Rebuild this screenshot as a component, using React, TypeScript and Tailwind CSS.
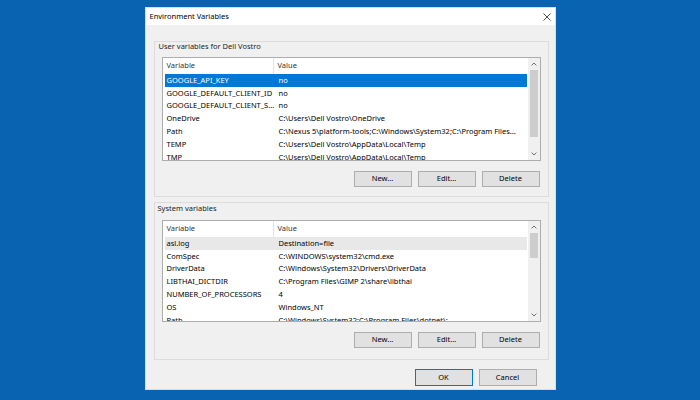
import React from "react";

type Row = [string, string];

const userRows: Row[] = [
  ["GOOGLE_API_KEY", "no"],
  ["GOOGLE_DEFAULT_CLIENT_ID", "no"],
  ["GOOGLE_DEFAULT_CLIENT_S...", "no"],
  ["OneDrive", "C:\\Users\\Dell Vostro\\OneDrive"],
  ["Path", "C:\\Nexus 5\\platform-tools;C:\\Windows\\System32;C:\\Program Files..."],
  ["TEMP", "C:\\Users\\Dell Vostro\\AppData\\Local\\Temp"],
  ["TMP", "C:\\Users\\Dell Vostro\\AppData\\Local\\Temp"],
];

const systemRows: Row[] = [
  ["asl.log", "Destination=file"],
  ["ComSpec", "C:\\WINDOWS\\system32\\cmd.exe"],
  ["DriverData", "C:\\Windows\\System32\\Drivers\\DriverData"],
  ["LIBTHAI_DICTDIR", "C:\\Program Files\\GIMP 2\\share\\libthai"],
  ["NUMBER_OF_PROCESSORS", "4"],
  ["OS", "Windows_NT"],
  ["Path", "C:\\Windows\\System32;C:\\Program Files\\dotnet\\;"],
];

const Chevron = ({ down = false }: { down?: boolean }) => (
  <svg width="6" height="4" viewBox="0 0 6 4" className={down ? "rotate-180" : ""}>
    <path d="M0.6 3.4 L3 1 L5.4 3.4" fill="none" stroke="#606060" strokeWidth="0.9" />
  </svg>
);

interface ListBoxProps {
  rows: Row[];
  focused: boolean;
  height: string;
  thumbTop: string;
  thumbHeight: string;
}

const ListBox = ({ rows, focused, height, thumbTop, thumbHeight }: ListBoxProps) => (
  <div className={`${height} flex border border-[#adadad] bg-white overflow-hidden`}>
    <div className="flex-1 flex flex-col overflow-hidden">
      <div className="h-[16px] shrink-0 flex items-center text-[#333]">
        <div className="w-[111px] h-full flex items-center pl-[4px] border-r border-[#e5e5e5]">
          Variable
        </div>
        <div className="pl-[4px]">Value</div>
      </div>
      <div className="px-[2px] pr-[1px]">
        {rows.map(([name, value], i) => {
          const sel = i === 0;
          const bg = sel ? (focused ? "bg-[#0078d7] text-white" : "bg-[#e8e8e8]") : "";
          return (
            <div key={name} className={`h-[12.8px] flex items-center whitespace-nowrap ${bg}`}>
              <div className="w-[112px] pl-[2px] shrink-0">{name}</div>
              <div className="pl-[2px]">{value}</div>
            </div>
          );
        })}
      </div>
    </div>
    <div className="w-[12px] shrink-0 bg-[#f0f0f0] flex flex-col items-center">
      <div className="h-[12px] shrink-0 flex items-center justify-center">
        <Chevron />
      </div>
      <div className={`${thumbTop} shrink-0`} />
      <div className={`${thumbHeight} w-[8px] shrink-0 bg-[#cdcdcd]`} />
      <div className="flex-1" />
      <div className="h-[12px] shrink-0 flex items-center justify-center">
        <Chevron down />
      </div>
    </div>
  </div>
);

const Button = ({ label, primary = false }: { label: string; primary?: boolean }) => (
  <button
    className={`w-[58px] h-full flex items-center justify-center bg-[#e1e1e1] border ${
      primary ? "border-[#0078d7]" : "border-[#adadad]"
    }`}
  >
    {label}
  </button>
);

const ButtonRow = () => (
  <div className="mt-[10px] h-[16px] flex justify-end gap-[6px] pr-[1px]">
    <Button label="New..." />
    <Button label="Edit..." />
    <Button label="Delete" />
  </div>
);

export default function App() {
  return (
    <div className="w-[700px] h-[400px] bg-[#0a63b1] flex justify-center pt-[7px] font-['Noto_Sans',sans-serif] text-[7.5px] text-black">
      <div className="w-[411px] h-[383px] flex flex-col bg-[#f0f0f0] border border-[#cfe0f1]">
        <div className="h-[17px] shrink-0 bg-white flex items-center justify-between pl-[4px] pr-[4px]">
          <span className="text-[7.5px]">Environment Variables</span>
          <svg width="8" height="8" viewBox="0 0 8 8">
            <path d="M0.5 0.5 L7.5 7.5 M7.5 0.5 L0.5 7.5" stroke="#222" strokeWidth="0.8" />
          </svg>
        </div>

        <div className="flex-1 flex flex-col pl-[8px] pr-[6px] pt-[16px]">
          <div className="flex flex-col border border-[#dcdcdc] px-[7px] pb-[9px]">
            <div className="h-[9px] leading-[9px] -ml-[3px] text-[#222]">User variables for Dell Vostro</div>
            <div className="mt-[6px]">
              <ListBox rows={userRows} focused height="h-[104px]" thumbTop="h-0" thumbHeight="h-[67px]" />
            </div>
            <ButtonRow />
          </div>

          <div className="mt-[5px] flex flex-col border border-[#dcdcdc] px-[7px] pb-[11px]">
            <div className="h-[10px] leading-[10px] -ml-[4px] text-[#222]">System variables</div>
            <div className="mt-[7px]">
              <ListBox rows={systemRows} focused={false} height="h-[102px]" thumbTop="h-0" thumbHeight="h-[25px]" />
            </div>
            <ButtonRow />
          </div>

          <div className="mt-[9px] h-[17px] flex justify-end gap-[6px] pr-[12px]">
            <Button label="OK" primary />
            <Button label="Cancel" />
          </div>
        </div>
      </div>
    </div>
  );
}
